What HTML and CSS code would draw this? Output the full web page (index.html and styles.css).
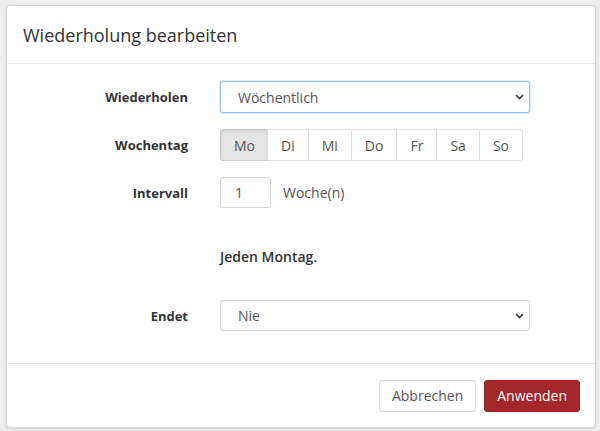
FILE: index.html
```html
<!DOCTYPE html>
<html lang="de">
<head>
    <meta charset="UTF-8">
    <meta name="viewport" content="width=device-width, initial-scale=1.0">
    <title>Wiederholung bearbeiten</title>
    <link rel="stylesheet" href="styles.css">
</head>
<body>
    <div class="modal">
        <div class="modal-header">
            <h4>Wiederholung bearbeiten</h4>
        </div>

        <div class="modal-body">
            <div class="f-row">
                <label for="frepeat">Wiederholen</label>
                <div class="select-wrap focused">
                    <select id="frepeat">
                        <option>Täglich</option>
                        <option selected>Wöchentlich</option>
                        <option>Monatlich</option>
                        <option>Jährlich</option>
                    </select>
                    <svg class="chev" width="9" height="6" viewBox="0 0 9 6"><path d="M1 1l3.5 3.5L8 1" fill="none" stroke="#333" stroke-width="1.6"/></svg>
                </div>
            </div>

            <div class="f-row">
                <label>Wochentag</label>
                <div class="btn-group">
                    <button class="day active">Mo</button>
                    <button class="day">Di</button>
                    <button class="day">Mi</button>
                    <button class="day">Do</button>
                    <button class="day">Fr</button>
                    <button class="day">Sa</button>
                    <button class="day">So</button>
                </div>
            </div>

            <div class="f-row">
                <label for="finterval">Intervall</label>
                <div class="interval">
                    <input type="text" id="finterval" value="1">
                    <span>Woche(n)</span>
                </div>
            </div>

            <div class="summary">Jeden Montag.</div>

            <div class="f-row">
                <label for="fend">Endet</label>
                <div class="select-wrap">
                    <select id="fend">
                        <option selected>Nie</option>
                        <option>Nach</option>
                        <option>Am</option>
                    </select>
                    <svg class="chev" width="9" height="6" viewBox="0 0 9 6"><path d="M1 1l3.5 3.5L8 1" fill="none" stroke="#333" stroke-width="1.6"/></svg>
                </div>
            </div>
        </div>

        <div class="modal-footer">
            <button class="btn">Abbrechen</button>
            <button class="btn btn-primary">Anwenden</button>
        </div>
    </div>
</body>
</html>
```

FILE: styles.css
```css
body {
    margin: 0;
    padding: 5px 4px 3px 6px;
    background-color: #eeeeee;
    font-family: "Open Sans", "Noto Sans", sans-serif;
    color: #333;
}
.modal {
    width: 588px;
    height: 421px;
    background: #fff;
    border: 1px solid #d6d6d6;
    border-radius: 4px;
    box-shadow: 0 1px 3px rgba(0, 0, 0, 0.12);
    display: flex;
    flex-direction: column;
}
.modal-header {
    height: 57px;
    border-bottom: 1px solid #e8e8e8;
    padding: 0 16px;
    display: flex;
    align-items: center;
}
h4 {
    margin: 0;
    font-size: 18px;
    font-weight: 400;
    color: #333;
}
.modal-body {
    flex: 1;
    padding-top: 17px;
    border-bottom: 1px solid #e8e8e8;
}
.f-row {
    display: flex;
    align-items: center;
    margin-bottom: 16px;
}
.f-row label {
    width: 181px;
    text-align: right;
    font-size: 13px;
    font-weight: 700;
    color: #333;
    margin-right: 32px;
}
.select-wrap {
    position: relative;
    width: 310px;
}
.select-wrap select {
    width: 100%;
    height: 31px;
    appearance: none;
    -webkit-appearance: none;
    border: 1px solid #cfd4d9;
    border-radius: 3px;
    background: #fff;
    padding: 0 17px;
    font-family: inherit;
    font-size: 14px;
    color: #555;
}
.select-wrap.focused select {
    height: 32px;
    border-color: #8fc3ea;
    box-shadow: 0 0 0 1px rgba(128, 189, 235, 0.3);
    outline: none;
}
.chev {
    position: absolute;
    right: 6px;
    top: 13px;
    pointer-events: none;
}
.btn-group {
    display: flex;
}
.day {
    height: 32px;
    min-width: 41px;
    padding: 0 13px;
    border: 1px solid #ddd;
    margin-left: -1px;
    background: #fff;
    font-family: inherit;
    font-size: 14px;
    color: #555;
}
.day:first-child {
    margin-left: 0;
    border-radius: 3px 0 0 3px;
}
.day:last-child {
    border-radius: 0 3px 3px 0;
}
.day.active {
    width: 48px;
    background: #e4e4e4;
    border-color: #c9c9c9;
    box-shadow: inset 0 2px 3px rgba(0, 0, 0, 0.08);
}
.interval {
    display: flex;
    align-items: center;
}
.interval input {
    width: 51px;
    height: 31px;
    box-sizing: border-box;
    border: 1px solid #d6d6d6;
    border-radius: 3px;
    padding: 0 14px;
    font-family: inherit;
    font-size: 14px;
    color: #555;
}
.interval span {
    margin-left: 12px;
    font-size: 14px;
    color: #555;
}
.summary {
    margin: 39px 0 0 213px;
    height: 53px;
    font-size: 14px;
    font-weight: 600;
    color: #333;
}
.modal-footer {
    height: 63px;
    display: flex;
    align-items: center;
    justify-content: flex-end;
    padding-right: 15px;
}
.btn {
    height: 32px;
    padding: 0 12px;
    margin-left: 8px;
    border: 1px solid #d9d9d9;
    border-radius: 3px;
    background: #fff;
    font-family: inherit;
    font-size: 14px;
    color: #555;
}
.btn-primary {
    background: #a3262b;
    border-color: #9a2227;
    color: #fff;
}
```
